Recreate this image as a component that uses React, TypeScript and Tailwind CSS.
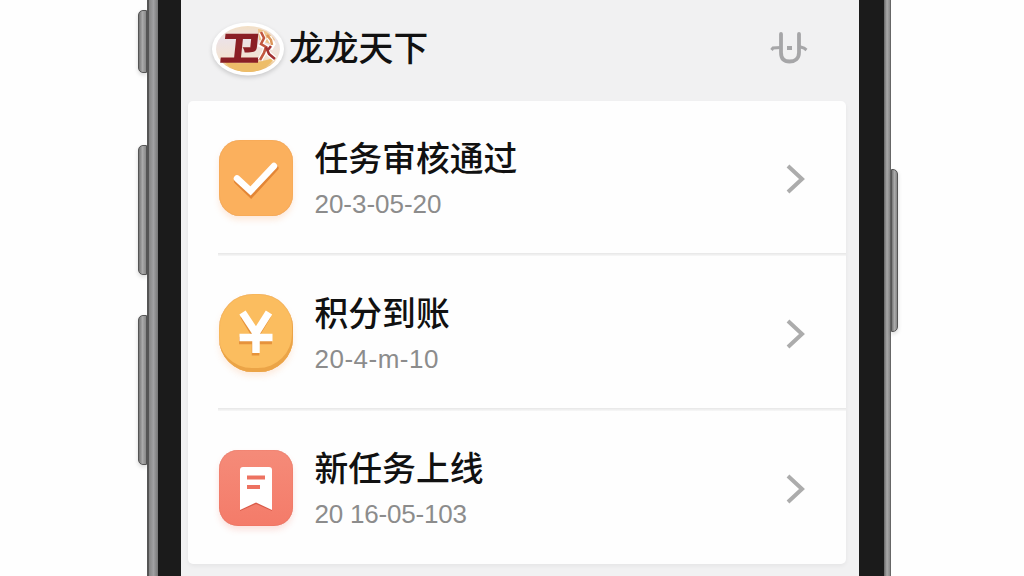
import type { ReactNode } from "react";

type Notice = {
  title: string;
  date: string;
  dateClass: string;
  icon: ReactNode;
};

function LogoMark() {
  return (
    <svg viewBox="0 0 74 58" className="h-[58px] w-[74px] shrink-0 drop-shadow-[0_2px_2px_rgba(0,0,0,0.16)]">
      <defs>
        <linearGradient id="logo-bg" x1="0" y1="0" x2="0" y2="1">
          <stop offset="0" stopColor="#f3dfc4" />
          <stop offset="0.3" stopColor="#ece2e6" />
          <stop offset="0.7" stopColor="#f3e3d2" />
          <stop offset="1" stopColor="#e6ab4c" />
        </linearGradient>
      </defs>
      <ellipse cx="37" cy="29" rx="36" ry="26.500" fill="#fff" />
      <ellipse cx="37" cy="29" rx="32" ry="23" fill="url(#logo-bg)" />
      <path d="M47 9c7 1 13 5 17 11l-5 4-11-4z" fill="#efc48a" />
      <path d="M13 41c14 4 36 3 51-4-5 9-16 15-27 15-10 0-19-4-24-11z" fill="#edbd69" />
      <text
        x="0"
        y="0"
        transform="translate(8.5 39.5) skewX(-6) scale(1.2 1)"
        fontSize="33"
        fontWeight="700"
        stroke="#8b1f25"
        strokeWidth="1.4"
        fill="#8b1f25"
        className="font-['Noto_Sans_CJK_SC',sans-serif]"
      >
        卫
      </text>
      <path d="M50 12l3 7-3 6 5 2-2 6-4 7M55 28l3 6 6 5M58 17l4 7-3 5" fill="none" stroke="#fff" strokeWidth="5" />
      <path d="M50 12l3 6-3 6 5 3-2 6-4 7" fill="none" stroke="#c2583f" strokeWidth="2.600" />
      <path d="M55 27l3 7 6 5M56 31l4-5" fill="none" stroke="#a33232" strokeWidth="2.600" />
      <path d="M56 15l4 5 1 5" fill="none" stroke="#dc9358" strokeWidth="2.500" />
    </svg>
  );
}

function HeaderAction() {
  return (
    <svg viewBox="0 0 38 36" fill="none" stroke="#a6a6a8" className="h-9 w-[38px]">
      <path d="M11 4v18.500c0 6 3 9 8.500 9s9.500-3 9.500-9V4" strokeWidth="3.800" strokeLinecap="round" />
      <path d="M1.500 20l1.500-2 8-.5M29 16.500l5 1.500 2.500 2" strokeWidth="3" />
      <path d="M17 18h5" strokeWidth="4" />
    </svg>
  );
}

const checkIcon = (
  <div className="h-[76px] w-[74px] rounded-[21px] bg-[#fbb05d] shadow-[0_4px_6px_rgba(250,150,80,0.2),inset_0_0_1px_#d98535]">
    <svg viewBox="0 0 74 76" fill="none">
      <path d="M18.500 40l13.500 13 24-26" stroke="#e38636" strokeWidth="7" strokeLinecap="round" transform="translate(0 1)" />
      <path d="M18 38.500L31.500 51 55 26" stroke="#fff" strokeWidth="6.500" strokeLinecap="round" />
    </svg>
  </div>
);

const yuanIcon = (
  <div className="h-[78px] w-[74px] rounded-[34px] bg-[#fbbd5f] shadow-[0_4px_6px_rgba(250,150,80,0.18),inset_-1px_-4px_0_#eba447,inset_0_0_1px_#d98535]">
    <svg viewBox="0 0 74 78" fill="none" strokeWidth="7.500">
      <path d="M25 20l12 20 12-20M20.500 45h33M37 38v22" stroke="#e6933c" transform="translate(-0.5 1.500)" />
      <path d="M23.500 18.500L37 39l13-20.500M20.500 43.500h33M37 36v23" stroke="#fff" />
    </svg>
  </div>
);

const bookmarkIcon = (
  <div className="h-[76px] w-[74px] rounded-[19px] bg-linear-to-b from-[#f58b79] to-[#f47b69] shadow-[0_4px_6px_rgba(240,100,80,0.18),inset_0_0_1px_#d05442]">
    <svg viewBox="0 0 74 76">
      <path d="M24 18h26a3 3 0 0 1 3 3v38L37 52 21 59V21a3 3 0 0 1 3-3z" fill="#d95b49" transform="translate(0 2)" />
      <path d="M24 17h26a3 3 0 0 1 3 3v40L37 52.500 21 60V20a3 3 0 0 1 3-3z" fill="#fff" />
      <path d="M28 27.500h18M28 37h13" stroke="#ed7261" strokeWidth="4" />
    </svg>
  </div>
);

const notices: Notice[] = [
  { title: "任务审核通过", date: "20-3-05-20", dateClass: "tracking-[-0.03px]", icon: checkIcon },
  { title: "积分到账", date: "20-4-m-10", dateClass: "tracking-[0.5px]", icon: yuanIcon },
  { title: "新任务上线", date: "20 16-05-103", dateClass: "tracking-[-0.2px]", icon: bookmarkIcon },
];

function NoticeRow({ notice, last }: { notice: Notice; last: boolean }) {
  return (
    <li>
      <div className="flex h-[152px] items-center pr-[41px] pl-[30.500px]">
        <div className="flex w-[74px] shrink-0 items-center pt-0.5">{notice.icon}</div>
        <div className="ml-[22px] flex-1 pt-[7px]">
          <h2 className="text-[33.8px] leading-[46px] font-medium text-[#111]">{notice.title}</h2>
          <p className={`font-['Liberation_Sans',sans-serif] text-[26px] leading-[48px] text-[#8c8c8c] ${notice.dateClass}`}>{notice.date}</p>
        </div>
        <svg viewBox="0 0 20 30" fill="none" stroke="#acacac" strokeWidth="4" className="mt-[3px] h-[30px] w-5">
          <path d="M3 2l14 13L3 28" />
        </svg>
      </div>
      {last ? null : <div className="ml-[30px] h-[3px] bg-linear-to-b from-[#e6e6e6] to-[#f8f8f8]" />}
    </li>
  );
}

function SideButton({ className }: { className: string }) {
  return <div className={`border border-[#555] bg-linear-to-r from-[#777] via-[#aaa] to-[#888] shadow-[0_2px_4px_rgba(0,0,0,0.15)] ${className}`} />;
}

export default function App() {
  return (
    <div className="flex h-[576px] w-[1024px] overflow-hidden bg-[#fefefe] font-['Noto_Sans_CJK_SC',sans-serif]">
      <div className="flex w-[147px] shrink-0 flex-col items-end pt-[10px]">
        <SideButton className="h-[63px] w-[9px] rounded-l-[5px]" />
        <SideButton className="mt-[72px] h-[130px] w-[9px] rounded-l-[5px]" />
        <SideButton className="mt-[40px] h-[150px] w-[9px] rounded-l-[5px]" />
      </div>

      <div className="w-[11px] shrink-0 border-l-2 border-[#555] bg-linear-to-r from-[#858585] via-[#a1a1a3] to-[#777]" />
      <div className="w-[23px] shrink-0 bg-[#1b1b1b]" />

      <main className="w-[678px] shrink-0 bg-[#f1f1f2] pl-[7px]">
        <header className="flex h-[101px] items-start pt-5">
          <div className="ml-[23px]">
            <LogoMark />
          </div>
          <h1 className="-mt-0.5 ml-1 flex-1 text-[34.8px] leading-[56px] font-medium text-[#111]">龙龙天下</h1>
          <div className="mt-[10px] mr-[51px]">
            <HeaderAction />
          </div>
        </header>
        <ul className="h-[463px] w-[658px] rounded-[5px] bg-[#fefefe] shadow-[0_2px_4px_rgba(0,0,0,0.05)]">
          {notices.map((notice, index) => (
            <NoticeRow key={notice.title} notice={notice} last={index === notices.length - 1} />
          ))}
        </ul>
      </main>

      <div className="w-[25px] shrink-0 bg-[#1b1b1b]" />
      <div className="w-[7px] shrink-0 border-r border-[#666] bg-linear-to-r from-[#666] via-[#aaa] to-[#888]" />
      <div className="pt-[169px]">
        <SideButton className="h-[163px] w-[7px] rounded-r-[5px]" />
      </div>
    </div>
  );
}
